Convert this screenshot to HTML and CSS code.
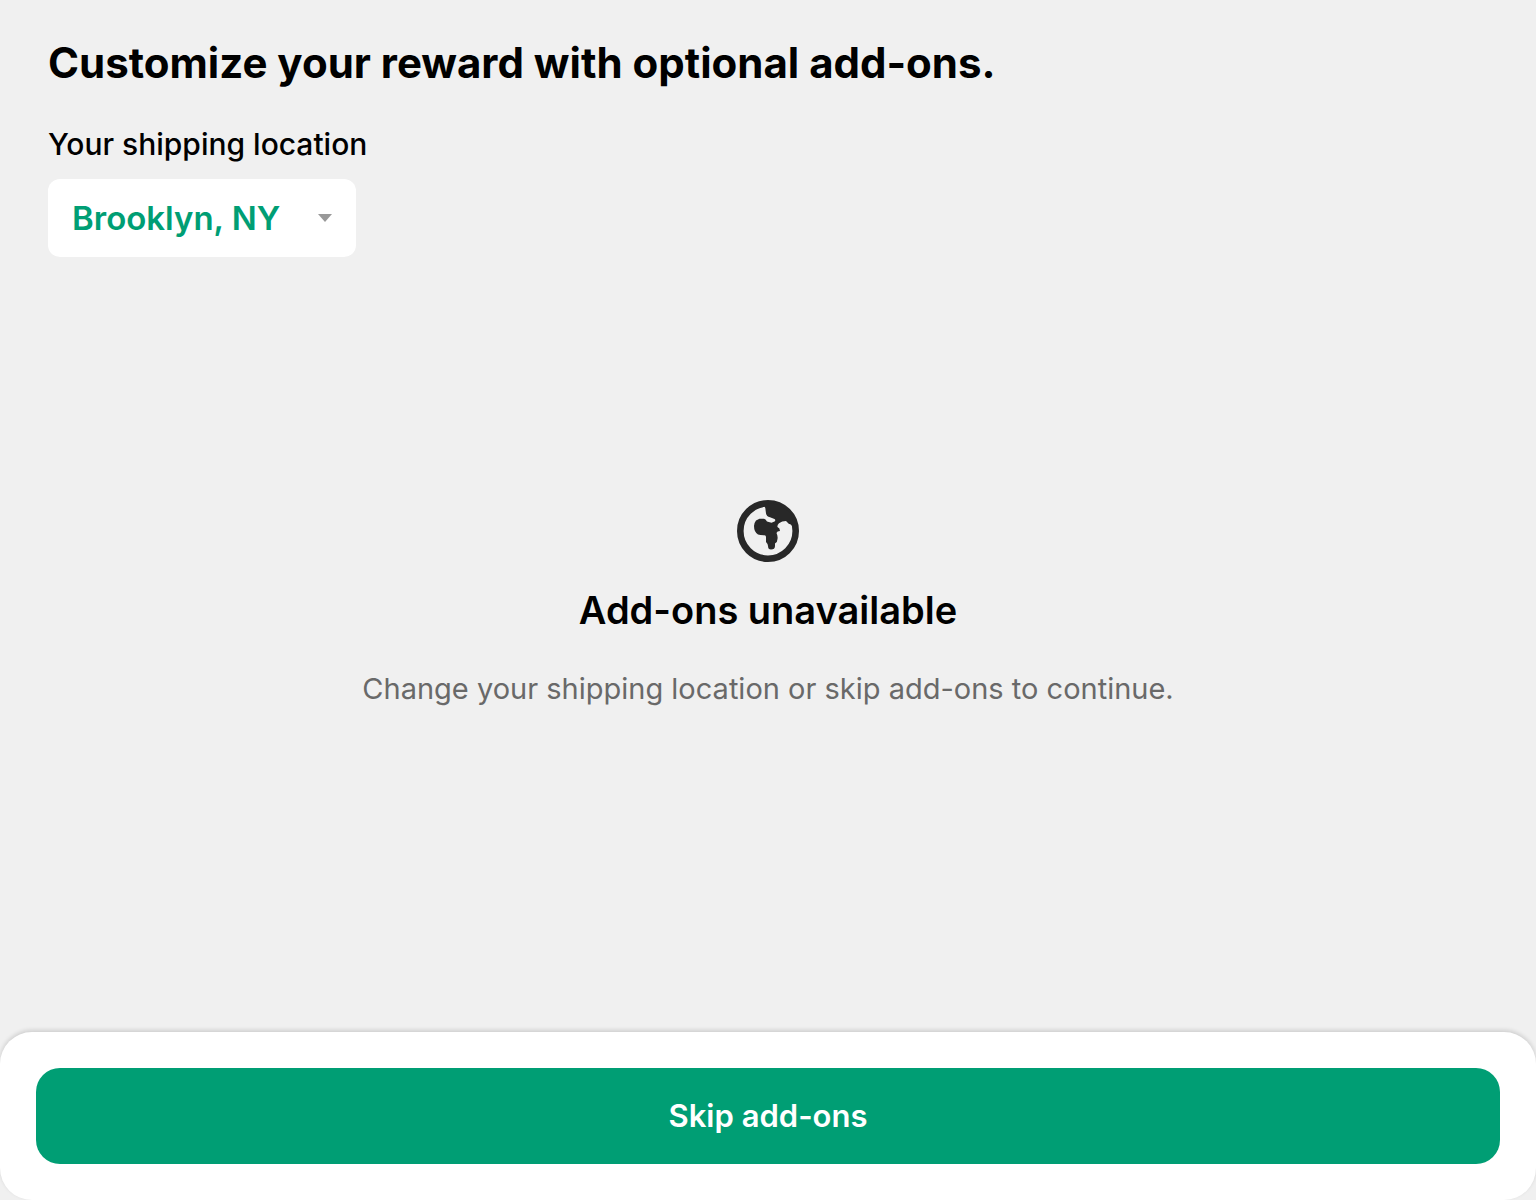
FILE: index.html
```html
<!DOCTYPE html>
<html lang="en">
<head>
<meta charset="utf-8">
<meta name="viewport" content="width=device-width, initial-scale=1">
<title>Add-ons</title>
<link rel="stylesheet" href="styles.css">
</head>
<body>
<main class="content">
  <h1 class="title">Customize your reward with optional add-ons.</h1>
  <label class="label" for="location">Your shipping location</label>
  <div class="picker">
    <select class="select" id="location"><option>Brooklyn, NY</option></select>
    <svg class="caret" viewBox="0 0 14 8" aria-hidden="true"><path d="M0 0H14L7 8Z"/></svg>
  </div>
  <section class="empty">
    <svg class="globe" viewBox="0 0 62 62" aria-hidden="true">
      <circle cx="31" cy="31" r="27.700" fill="none" stroke="#282828" stroke-width="6.600"/>
      <path fill="#282828" d="M26 6Q28 6 28.300 8L29 13.500Q29.500 16.500 33 17.300L37.500 19Q39 20 37.500 21.500L34.500 22.700L30 21.500Q28.500 18.700 27 18.700H22.500L19 20.500Q17 23 17 26Q17 32 21 34.500Q23 35.300 27.500 35.300Q29 35.500 29 37V42Q31 44 31 46Q31 49.500 34 49.500Q38 49.500 38 46V43.500Q40.500 42 40.500 39Q41 36 39.500 33Q40 31 43 31Q43 28 40.500 27Q40 25 42 23.300Q45 21 49 21L52 24Q54 23.500 55.500 26.500L57 26.500L54 14L43 5L31 3Z"/>
    </svg>
    <h2 class="heading">Add-ons unavailable</h2>
    <p class="message">Change your shipping location or skip add-ons to continue.</p>
  </section>
</main>
<footer class="bar"><button class="skip" type="button">Skip add-ons</button></footer>
</body>
</html>
```
FILE: styles.css
```css
* { box-sizing: border-box; }
body {
  margin: 0;
  min-height: 100vh;
  display: flex;
  flex-direction: column;
  background: #f0f0f0;
  color: #000;
  font-family: Inter, "Liberation Sans", sans-serif;
}
.content {
  flex: 1;
  display: flex;
  flex-direction: column;
  align-items: flex-start;
  padding: 36px 48px 0;
}
.title { margin: 0; font-size: 42px; line-height: 54px; font-weight: 700; }
.label { margin-top: 36px; font-size: 30px; line-height: 36px; font-weight: 500; }
.picker { display: grid; align-items: center; margin-top: 17px; }
.select {
  grid-area: 1 / 1;
  height: 78px;
  padding: 0 74px 0 24px;
  border: 0;
  border-radius: 12px;
  appearance: none;
  background: #fff;
  color: #009e74;
  font: 600 33px/42px Inter, "Liberation Sans", sans-serif;
}
.caret { grid-area: 1 / 1; justify-self: end; width: 14px; height: 8px; margin-right: 24px; fill: #999; pointer-events: none; }
.empty {
  flex: 1;
  align-self: stretch;
  display: flex;
  flex-direction: column;
  align-items: center;
  padding-top: 243px;
  text-align: center;
}
.globe { width: 62px; height: 62px; }
.heading { margin: 24px 0 0; font-size: 38px; line-height: 48px; font-weight: 600; }
.message { margin: 36px 0 0; color: #696969; font-size: 29px; line-height: 38px; }
.bar {
  padding: 36px;
  border-radius: 32px;
  background: #fff;
  box-shadow: 0 -2px 4px rgba(0, 0, 0, 0.14);
}
.skip {
  display: block;
  width: 100%;
  height: 96px;
  border: 0;
  border-radius: 24px;
  background: #009e74;
  color: #fff;
  font: 600 31px/40px Inter, "Liberation Sans", sans-serif;
}
```
